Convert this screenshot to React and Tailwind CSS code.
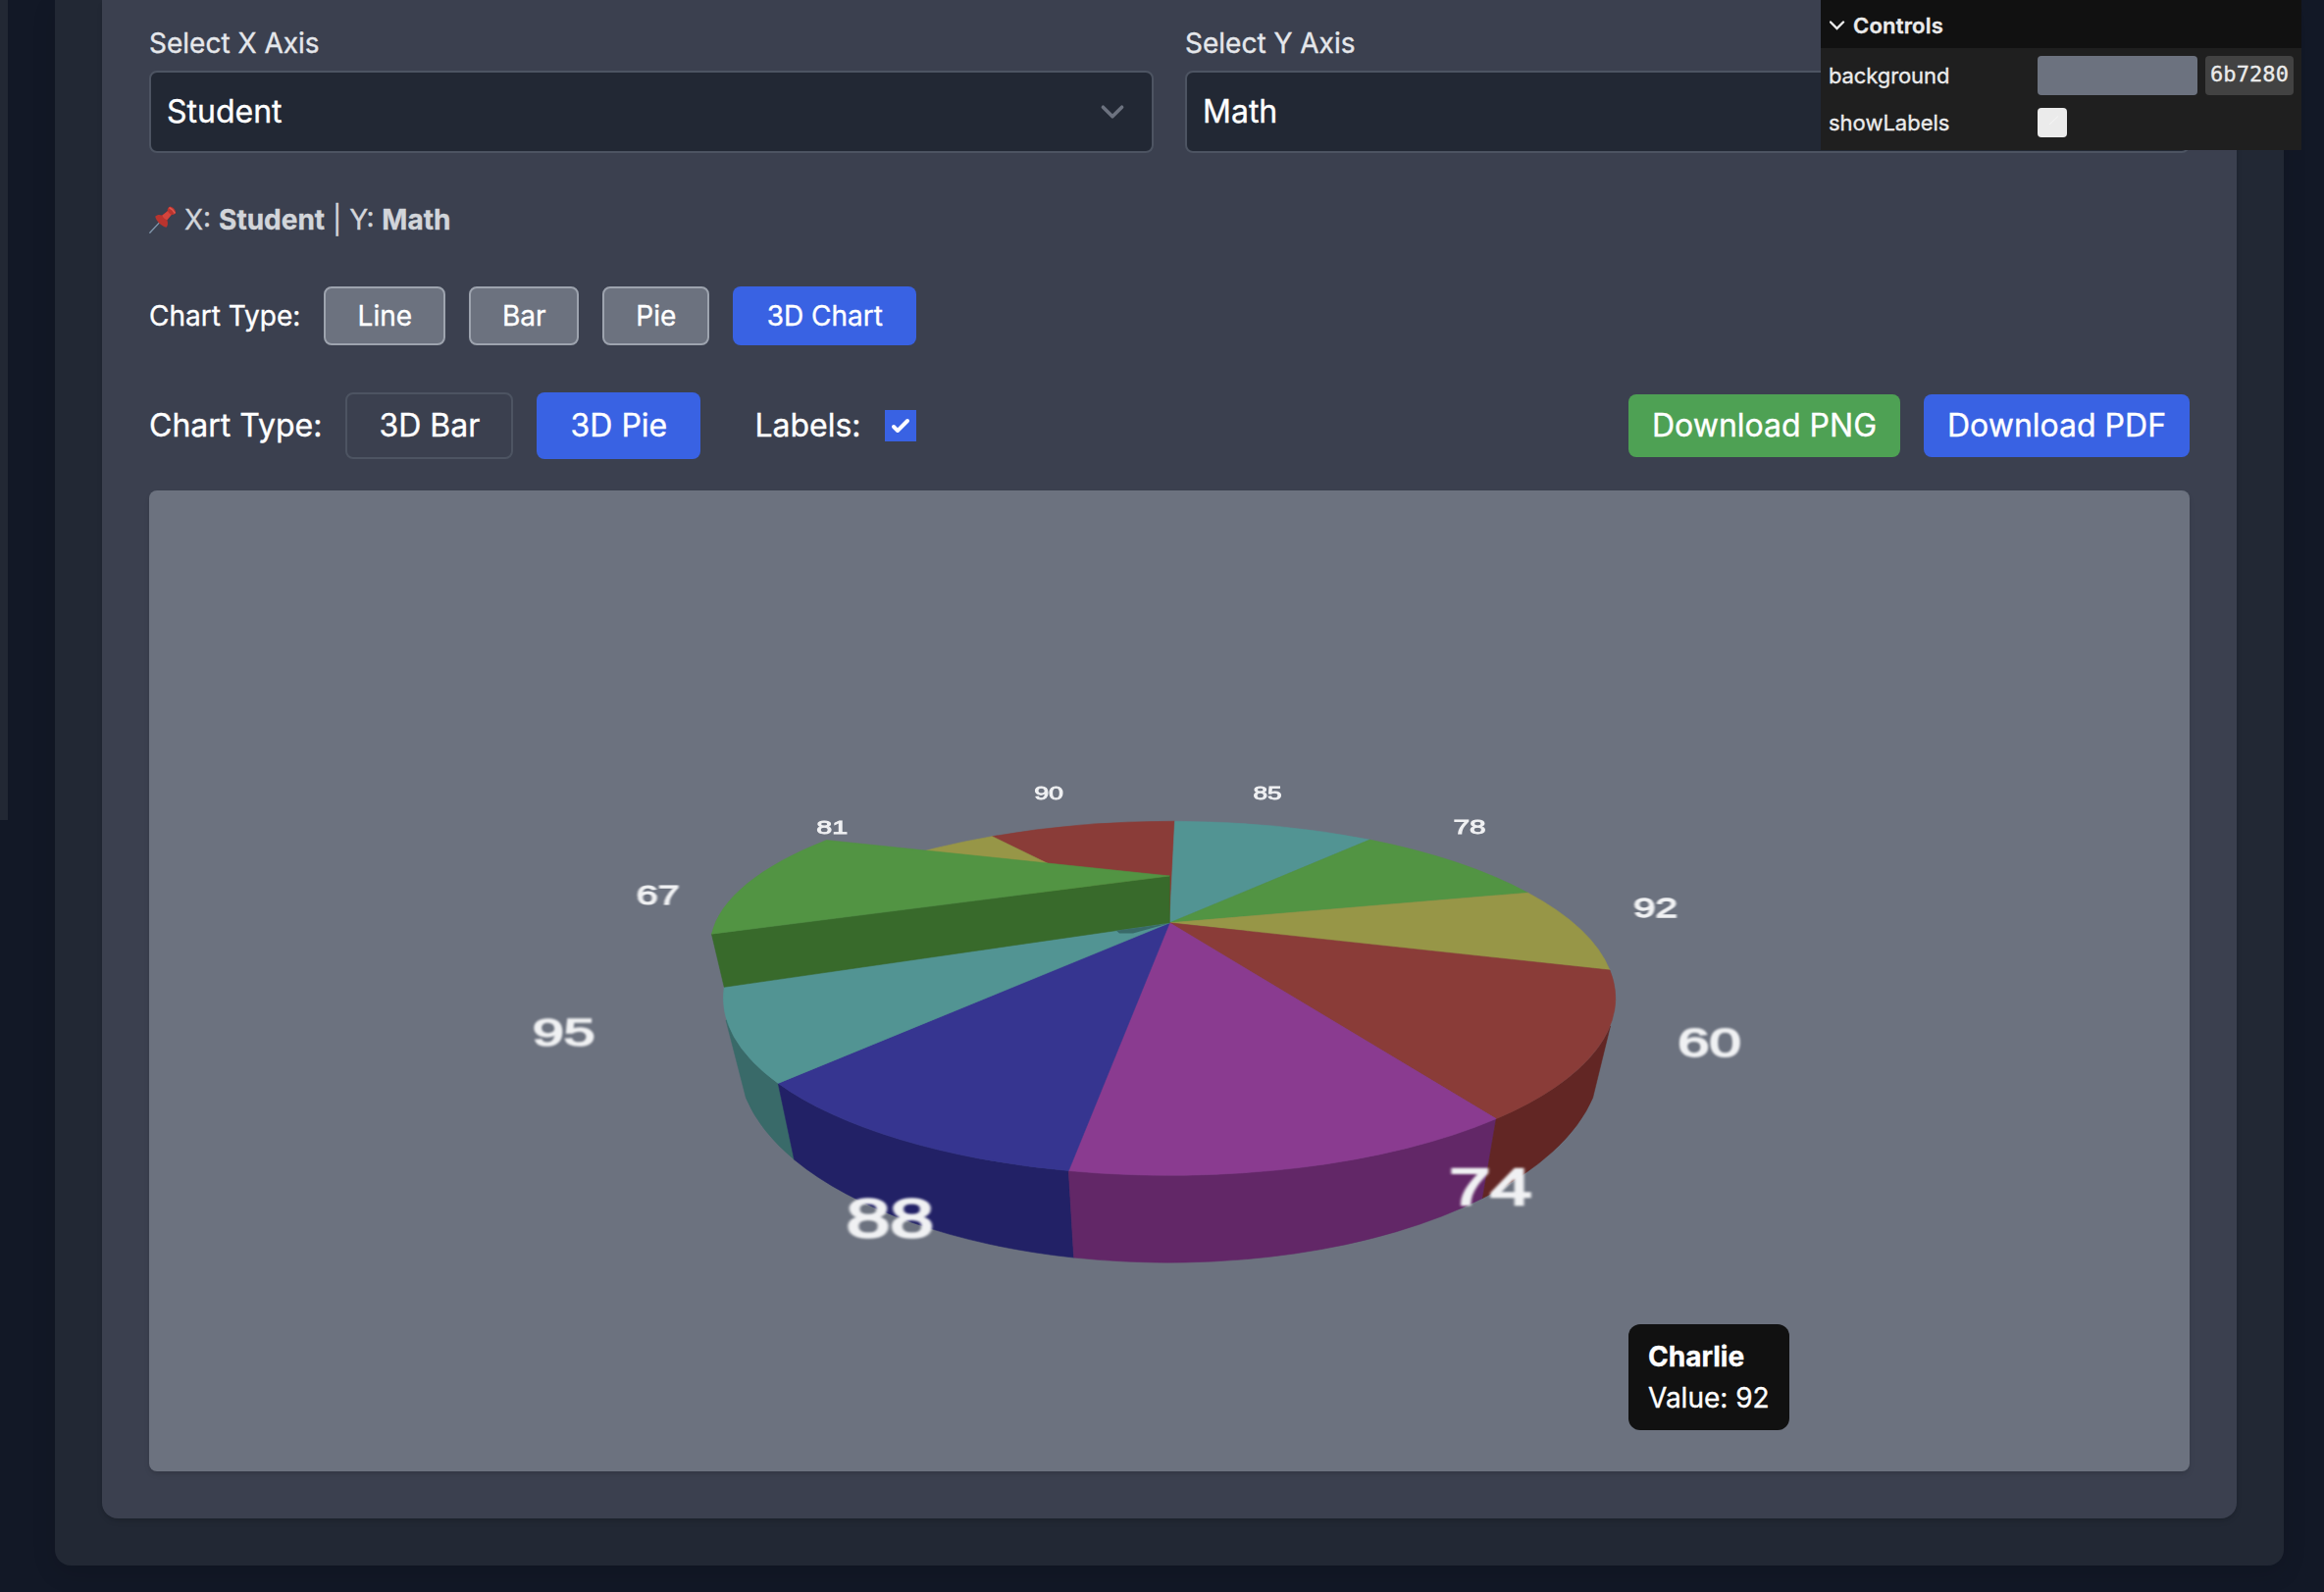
const slices = [
  // flat tops
  { d: "M1192.3 940.8 L1197.5 837.2 A454.7 180.6 0 0 0 1011.4 852.7 Z", fill: "#8a3c38" },
  { d: "M1192.3 940.8 L1011.4 852.7 A454.7 180.6 0 0 0 900 880 Z", fill: "#979647" },
  { d: "M1192.3 940.8 L1197.5 837.2 A454.7 180.6 0 0 1 1396.3 856.1 Z", fill: "#529493" },
  { d: "M1192.3 940.8 L1396.3 856.1 A454.7 180.6 0 0 1 1557.6 910.2 Z", fill: "#529443" },
  { d: "M1192.3 940.8 L1557.6 910.2 A454.7 180.6 0 0 1 1641 989 Z", fill: "#979647" },
  { d: "M1192.3 940.8 L1641 989 A454.7 180.6 0 0 1 1525.2 1140.6 Z", fill: "#8a3c38" },
  { d: "M1192.3 940.8 L1525.2 1140.6 A454.7 180.6 0 0 1 1089.3 1193.6 Z", fill: "#8a3b90" },
  { d: "M1192.3 940.8 L1089.3 1193.6 A454.7 180.6 0 0 1 793.2 1104.4 Z", fill: "#363590" },
  { d: "M1192.3 940.8 L793.2 1104.4 A454.7 180.6 0 0 1 738.2 1006.3 Z", fill: "#529493" },
  // raised slice
  { d: "M725.4 952.2 L1192.3 893 L1192.3 940.8 L738.2 1006.3 Z", fill: "#386a2b" },
  { d: "M1192.3 893 L725.4 952.2 A468.2 163 0 0 1 842.5 856.5 Z", fill: "#529443" },
];

const sides = [
  { d: "M740 1040 L760.4 1119.2 A440.5 209 0 0 0 809.6 1182.2 L793.2 1104.4 A454.7 180.6 0 0 1 741 1040 Z", fill: "#396a69" },
  { d: "M793.2 1104.4 L809.6 1182.2 A440.5 209 0 0 0 1094.6 1282.1 L1089.3 1193.6 A454.7 180.6 0 0 1 793.2 1104.4 Z", fill: "#222166" },
  { d: "M1089.3 1193.6 L1094.6 1282.1 A440.5 209 0 0 0 1511.4 1221.5 L1525.2 1140.6 A454.7 180.6 0 0 1 1089.3 1193.6 Z", fill: "#622767" },
  { d: "M1525.2 1140.6 L1511.4 1221.5 A440.5 209 0 0 0 1623.6 1119.2 L1641.5 1046 A454.7 180.6 0 0 1 1525.2 1140.6 Z", fill: "#622624" },
];

// Left and right ink edges, cap top and baseline of every value label.
const labels = [
  { t: "90", x0: 1054.3, x1: 1083.9, y0: 802.8, y1: 815.2 },
  { t: "81", x0: 832.5, x1: 864.1, y0: 836.2, y1: 849.8 },
  { t: "67", x0: 649, x1: 692.3, y0: 903, y1: 922.4 },
  { t: "95", x0: 543.3, x1: 606, y0: 1039, y1: 1066.4 },
  { t: "88", x0: 863.2, x1: 951.4, y0: 1221.5, y1: 1260.8 },
  { t: "74", x0: 1477.7, x1: 1560.8, y0: 1191, y1: 1228.2 },
  { t: "60", x0: 1710.6, x1: 1774.3, y0: 1048.2, y1: 1077.2 },
  { t: "92", x0: 1665.2, x1: 1709.8, y0: 915.5, y1: 935.4 },
  { t: "78", x0: 1481.7, x1: 1514.5, y0: 835, y1: 849.8 },
  { t: "85", x0: 1277.7, x1: 1306.5, y0: 802.8, y1: 815.4 },
];

function ValueLabel({ t, x0, x1, y0, y1 }) {
  const size = (y1 - y0) / 0.71;
  const sx = (x1 - x0) / (size * 1.1);
  return (
    <text
      transform={`translate(${(x0 + x1) / 2} ${y1}) scale(${sx} 1)`}
      textAnchor="middle"
      fontSize={size}
      fill="#f0f1f3"
      stroke="#f0f1f3"
      strokeWidth={size * 0.045}
      style={{ filter: `blur(${size * 0.022}px)` }}
    >
      {t}
    </text>
  );
}

function PieChart() {
  return (
    <svg viewBox="152 500 2080 1000" className="block h-full w-full font-['Liberation_Sans',sans-serif]">
      {sides.map((s) => (
        <path key={s.d} d={s.d} fill={s.fill} stroke={s.fill} strokeWidth="0.6" />
      ))}
      {slices.map((s) => (
        <path key={s.d} d={s.d} fill={s.fill} stroke={s.fill} strokeWidth="0.6" />
      ))}
      <path d="M1138 948.8 L1191 941.4 L1155 951.5 L1141 951.5 Z" fill="#396a69" />
      {labels.map((l) => (
        <ValueLabel key={l.t} {...l} />
      ))}
    </svg>
  );
}

function Pin() {
  return (
    <svg viewBox="0 0 28 28" className="h-7 w-7">
      <path d="M0.8 27.2 L12.6 14.6" stroke="#8298ad" strokeWidth="1.3" strokeLinecap="round" />
      <path d="M6.2 10.8 C8 8.8 11 8.8 13.2 9.6 L18.8 5 C18.4 3 19.4 1.2 21.4 0.6 C24.4 1.2 26.6 3.4 27.2 6.4 C26.6 8.2 25 9.2 23 8.8 L18.4 14.4 C19.4 17 19.2 19.8 17.6 21.8 C12.6 20.6 7.4 15.8 6.2 10.8 Z" fill="#b9342e" />
      <path d="M13.4 9.8 L19 5.2 C20.2 7 21.2 8.2 22.8 8.8 L18.2 14.2 C16 13.6 14.2 12 13.4 9.8 Z" fill="#d5443c" />
      <path d="M21 2 C23 2.8 25 4.6 26 6.8" stroke="#e0574e" strokeWidth="1.6" fill="none" strokeLinecap="round" />
    </svg>
  );
}

function SelectField({ label, value }) {
  return (
    <div>
      <div className="h-[72px] pt-6 text-[28px] leading-10 text-[#e5e7eb]">{label}</div>
      <div className="flex h-[84px] items-center justify-between rounded-lg border-2 border-[#4d5462] bg-[#222834] px-4 text-[32px] text-white">
        <span>{value}</span>
        <svg viewBox="0 0 20 20" fill="none" className="h-12 w-12">
          <path d="M6 8l4 4 4-4" stroke="#6c727f" strokeWidth="1.5" strokeLinecap="round" strokeLinejoin="round" />
        </svg>
      </div>
    </div>
  );
}

function Controls() {
  return (
    <div className="absolute left-[1856px] top-0 h-[153px] w-[490px] bg-[#1f1f1f] text-[22px] text-[#ebebeb]">
      <div className="flex h-[49px] items-center bg-[#111111] pl-[9px] pt-[3px] font-semibold tracking-[0.2px]">
        <svg viewBox="0 0 16 10" className="mr-[8px] h-[10px] w-4" fill="none">
          <path d="M1 1.5 L7.5 8 L14 1.5" stroke="#ebebeb" strokeWidth="2.4" strokeLinecap="round" />
        </svg>
        Controls
      </div>
      <div className="flex h-14 items-center pl-2">
        <span className="w-[213px] tracking-[-0.1px]">background</span>
        <span className="h-10 w-[163px] rounded bg-[#6c727f]" />
        <span className="ml-2 flex h-10 w-[90px] items-center justify-center rounded bg-[#424242] pb-[3px] font-['DejaVu_Sans_Mono',monospace] tracking-[0.1px]">6b7280</span>
      </div>
      <div className="flex h-10 items-center pl-2">
        <span className="w-[213px]">showLabels</span>
        <svg viewBox="0 0 30 30" className="h-[30px] w-[30px] rounded bg-[#ebebeb]">
          <path d="M12 17 L21 8.5" stroke="#f8f8f8" strokeWidth="0.8" />
        </svg>
      </div>
    </div>
  );
}

export default function App() {
  return (
    <div className="relative h-[1623px] w-[2369px] overflow-hidden bg-[#121826] font-['Inter',sans-serif] text-white [-webkit-text-stroke:0.35px]">
      <div className="flex h-full">
        <div className="h-[836px] w-2 bg-[#222834]" />
        <main className="ml-12 h-[1596px] w-[2272px] rounded-b-2xl bg-[#222834] px-12 pb-12 shadow-[0_8px_24px_rgba(0,0,0,0.12)]">
          <section className="h-[1548px] rounded-b-2xl bg-[#3b404f] px-12 shadow-md">
            <div className="grid grid-cols-2 gap-8">
              <SelectField label="Select X Axis" value="Student" />
              <SelectField label="Select Y Axis" value="Math" />
            </div>
            <div className="mt-12 flex h-10 items-center whitespace-pre text-[28px] leading-10 text-[#d2d5da]">
              <Pin />
              <span className="pl-2">X: <b>Student</b> | Y: <b>Math</b></span>
            </div>
            <div className="mt-12 flex h-[60px] items-center gap-6 text-[28px]">
              <span>Chart Type:</span>
              <button className="h-[60px] w-[124px] rounded-lg border-2 border-[#9da3ae] bg-[#6c727f]">Line</button>
              <button className="h-[60px] w-[112px] rounded-lg border-2 border-[#9da3ae] bg-[#6c727f]">Bar</button>
              <button className="h-[60px] w-[109px] rounded-lg border-2 border-[#9da3ae] bg-[#6c727f]">Pie</button>
              <button className="h-[60px] w-[187px] rounded-lg bg-[#3962e3]">3D Chart</button>
            </div>
            <div className="mt-12 flex h-[68px] items-center gap-6 text-[32px]">
              <span>Chart Type:</span>
              <button className="h-[68px] w-[171px] rounded-lg border-2 border-[#4d5462]">3D Bar</button>
              <button className="h-[68px] w-[167px] rounded-lg bg-[#3962e3]">3D Pie</button>
              <span className="ml-[31px]">Labels:</span>
              <span className="flex h-8 w-8 items-center justify-center bg-[#3962e3]">
                <svg viewBox="0 0 16 16" className="h-8 w-8" fill="white">
                  <path d="M12.207 4.793a1 1 0 010 1.414l-5 5a1 1 0 01-1.414 0l-2-2a1 1 0 011.414-1.414L6.5 9.086l4.293-4.293a1 1 0 011.414 0z" />
                </svg>
              </span>
              <button className="ml-auto h-16 w-[277px] rounded-lg bg-[#4ea154]">Download PNG</button>
              <button className="h-16 w-[271px] rounded-lg bg-[#3962e3]">Download PDF</button>
            </div>
            <div className="relative mt-8 h-[1000px] rounded-lg bg-[#6c727f] shadow-md">
              <PieChart />
              <div className="absolute left-[1508px] top-[850px] h-[108px] w-[164px] rounded-xl bg-[#111111] px-5 py-3 text-[28px] leading-[42px]">
                <div className="font-bold">Charlie</div>
                <div>Value: 92</div>
              </div>
            </div>
          </section>
        </main>
      </div>
      <Controls />
    </div>
  );
}
